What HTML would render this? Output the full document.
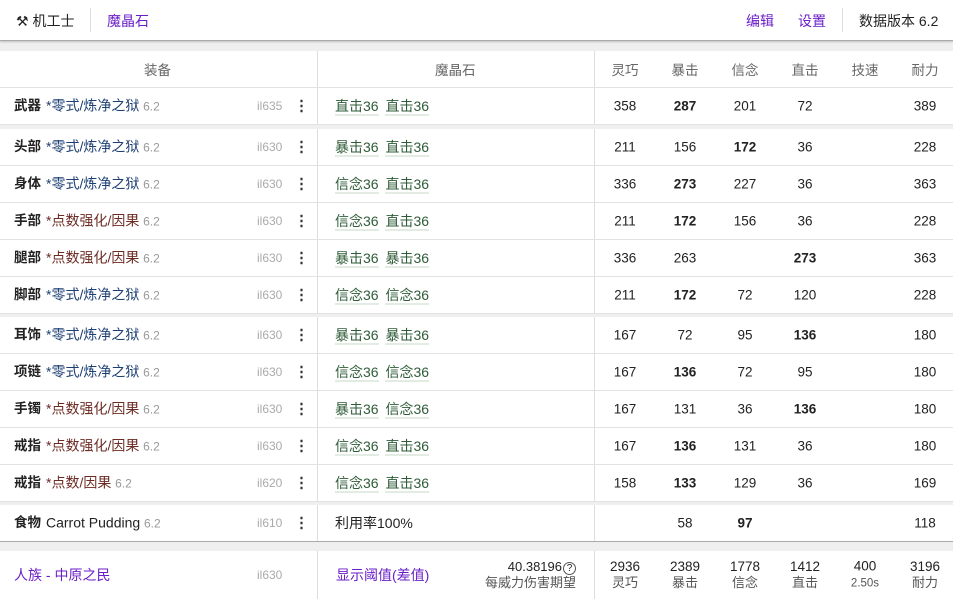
<!DOCTYPE html>
<html><head><meta charset="utf-8"><style>
*{margin:0;padding:0;box-sizing:border-box}
body{width:953px;height:599px;background:#efefef;font-family:"Liberation Sans","Noto Sans CJK SC",sans-serif;font-size:13.5px;color:#222;position:relative;overflow:hidden}
.top{position:absolute;left:0;top:0;width:953px;height:41px;background:#fff;border-bottom:1px solid #aaa;box-shadow:0 1px 2px rgba(0,0,0,.2)}
.a{position:absolute;white-space:nowrap}
.p{color:#6a1fc8}
.r{position:absolute;left:0;width:953px;background:#fff;border-bottom:1px solid #e2e2e2}
.r .a{top:50%;transform:translateY(-50%)}
.vl{position:absolute;top:0;bottom:0;width:1px;background:#ddd}
.lab{left:14px;font-weight:bold;font-size:13.5px;line-height:20px}
.nm{left:46px;line-height:20px}
.b{color:#1d3f73;font-size:14px}.o{color:#6b2a22;font-size:14px}
.v{color:#999;font-size:12px}
.il{left:257px;color:#aaa;font-size:12px}
.k{left:294px;font-weight:bold;color:#333;font-size:15px;line-height:1}
.m{left:335px;color:#2f5c38;font-size:14px}
.m span{border-bottom:2px solid #e3ece3;margin-right:3px}
.c{text-align:center;width:60px}
.bd{font-weight:bold}
.h{color:#666}
</style></head><body>
<div class="top">
<div class="a" style="left:16px;top:11px;font-size:14px">⚒ 机工士</div>
<div style="position:absolute;left:90px;top:8px;width:1px;height:24px;background:#ddd"></div>
<div class="a p" style="left:107px;top:11px;font-size:14px">魔晶石</div>
<div class="a p" style="left:746px;top:11px;font-size:14px">编辑</div>
<div class="a p" style="left:798px;top:11px;font-size:14px">设置</div>
<div style="position:absolute;left:842px;top:8px;width:1px;height:24px;background:#ddd"></div>
<div class="a" style="left:859px;top:11px;font-size:14px">数据版本 6.2</div>
</div>
<div id="rows"></div>
<script>
const cols=[595,655,715,775,835,895];
function stats(s){return s.map((v,i)=>v===''?'':`<div class="a c ${String(v).startsWith('*')?'bd':''}" style="left:${cols[i]}px">${String(v).replace('*','')}</div>`).join('')}
function vl(){return '<div class="vl" style="left:317px"></div><div class="vl" style="left:594px"></div>'}
let h='';
h+=`<div class="r" style="top:51px;height:37px">${vl()}<div class="a h" style="left:144px">装备</div><div class="a h" style="left:435px">魔晶石</div>${['灵巧','暴击','信念','直击','技速','耐力'].map((t,i)=>`<div class="a c h" style="left:${cols[i]}px">${t}</div>`).join('')}</div>`;
const Z='*零式/炼净之狱',D='*点数强化/因果';
const rows=[
[88,'武器',Z,'b','il635','直击36','直击36',[358,'*287',201,72,'',389]],
[129,'头部',Z,'b','il630','暴击36','直击36',[211,156,'*172',36,'',228]],
[166,'身体',Z,'b','il630','信念36','直击36',[336,'*273',227,36,'',363]],
[203,'手部',D,'o','il630','信念36','直击36',[211,'*172',156,36,'',228]],
[240,'腿部',D,'o','il630','暴击36','暴击36',[336,263,'','*273','',363]],
[277,'脚部',Z,'b','il630','信念36','信念36',[211,'*172',72,120,'',228]],
[317,'耳饰',Z,'b','il630','暴击36','暴击36',[167,72,95,'*136','',180]],
[354,'项链',Z,'b','il630','信念36','信念36',[167,'*136',72,95,'',180]],
[391,'手镯',D,'o','il630','暴击36','信念36',[167,131,36,'*136','',180]],
[428,'戒指',D,'o','il630','信念36','直击36',[167,'*136',131,36,'',180]],
[465,'戒指','*点数/因果','o','il620','信念36','直击36',[158,'*133',129,36,'',169]],
];
for(const r of rows){
h+=`<div class="r" style="top:${r[0]}px;height:37px">${vl()}<div class="a lab">${r[1]}</div><div class="a nm"><span class="${r[3]}">${r[2]}</span> <span class="v">6.2</span></div><div class="a il">${r[4]}</div><div class="a k">⋮</div><div class="a m"><span>${r[5]}</span> <span>${r[6]}</span></div>${stats(r[7])}</div>`;
}
h+=`<div class="r" style="top:505px;height:37px;border-bottom:1px solid #aaa">${vl()}<div class="a lab">食物</div><div class="a nm"><span style="font-size:14px">Carrot Pudding</span> <span class="v">6.2</span></div><div class="a il">il610</div><div class="a k">⋮</div><div class="a" style="left:335px;font-size:14px">利用率100%</div>${stats(['',58,'*97','','',118])}</div>`;
h+=`<div class="r" style="top:551px;height:48px;border:none">${vl()}<div class="a p" style="left:14px;font-size:14px">人族 - 中原之民</div><div class="a il">il630</div><div class="a p" style="left:336px;font-size:14px">显示阈值(差值)</div>
<div class="a" style="left:476px;text-align:right;width:100px;line-height:16px;font-size:13px">40.38196<span style="display:inline-block;width:13px;height:13px;border:1px solid #555;border-radius:50%;font-size:10px;line-height:11px;text-align:center;margin-left:1px">?</span><br><span style="color:#555">每威力伤害期望</span></div>
${[['2936','灵巧'],['2389','暴击'],['1778','信念'],['1412','直击'],['400','2.50s'],['3196','耐力']].map((t,i)=>`<div class="a c" style="left:${cols[i]}px;line-height:16px">${t[0]}<br><span style="color:#555;font-size:${i==4?11.5:13}px">${t[1]}</span></div>`).join('')}</div>`;
document.getElementById('rows').innerHTML=h;
</script>
</body></html>
